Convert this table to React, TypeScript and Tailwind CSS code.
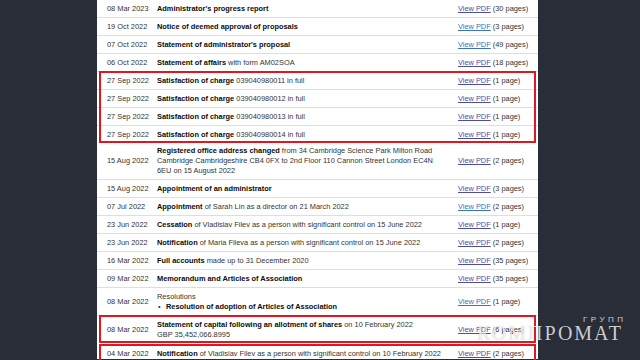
import React from "react";

const BLUE = "text-[#3b74b8]";
const PURPLE = "text-[#4f4d9e]";

function Row({
  date,
  children,
  pages,
  h = "h-[18px]",
  visited = true,
  border = true,
}: {
  date: string;
  children: React.ReactNode;
  pages: string;
  h?: string;
  visited?: boolean;
  border?: boolean;
}) {
  return (
    <div
      className={`flex items-center ${h} ${border ? "border-t border-[#dedede]" : ""} pl-[10px]`}
    >
      <div className="w-[50px] shrink-0 text-[#333]">{date}</div>
      <div className="w-[301px] shrink-0 leading-[10px] text-[#333] whitespace-nowrap">
        {children}
      </div>
      <div className="whitespace-nowrap text-[#333]">
        <span className={`underline ${visited ? PURPLE : BLUE}`}>View PDF</span> ({pages})
      </div>
    </div>
  );
}

function RedBox({ className = "" }: { className?: string }) {
  return (
    <div
      className={`pointer-events-none absolute left-[2px] right-[2px] border-2 border-[#e0171f] ${className}`}
    />
  );
}

export default function App() {
  return (
    <div
      className="relative h-[360px] w-[640px] overflow-hidden bg-[#292d37]"
      style={{ fontFamily: '"Liberation Sans", Arial, sans-serif' }}
    >
      <div className="ml-[97px] h-full w-[441px] bg-white text-[7.4px]">
        <div className="-mt-[1px]">
          <Row date="08 Mar 2023" pages="30 pages">
            <b className="text-[#0b0c0c]">Administrator's progress report</b>
          </Row>
          <Row date="19 Oct 2022" pages="3 pages" visited={false}>
            <b className="text-[#0b0c0c]">Notice of deemed approval of proposals</b>
          </Row>
          <Row date="07 Oct 2022" pages="49 pages" visited={false}>
            <b className="text-[#0b0c0c]">Statement of administrator's proposal</b>
          </Row>
          <Row date="06 Oct 2022" pages="18 pages">
            <b className="text-[#0b0c0c]">Statement of affairs</b> with form AM02SOA
          </Row>
          <div className="relative">
            <Row date="27 Sep 2022" pages="1 page">
              <b className="text-[#0b0c0c]">Satisfaction of charge</b> 039040980011 in full
            </Row>
            <Row date="27 Sep 2022" pages="1 page">
              <b className="text-[#0b0c0c]">Satisfaction of charge</b> 039040980012 in full
            </Row>
            <Row date="27 Sep 2022" pages="1 page">
              <b className="text-[#0b0c0c]">Satisfaction of charge</b> 039040980013 in full
            </Row>
            <Row date="27 Sep 2022" pages="1 page">
              <b className="text-[#0b0c0c]">Satisfaction of charge</b> 039040980014 in full
            </Row>
            <RedBox className="top-0 bottom-0" />
          </div>
          <Row date="15 Aug 2022" pages="2 pages" h="h-[36px]" border={false}>
            <b className="text-[#0b0c0c]">Registered office address changed</b> from 34 Cambridge Science Park Milton Road
            <br />
            Cambridge Cambridgeshire CB4 0FX to 2nd Floor 110 Cannon Street London EC4N
            <br />
            6EU on 15 August 2022
          </Row>
          <Row date="15 Aug 2022" pages="3 pages">
            <b className="text-[#0b0c0c]">Appointment of an administrator</b>
          </Row>
          <Row date="07 Jul 2022" pages="2 pages" visited={false}>
            <b className="text-[#0b0c0c]">Appointment</b> of Sarah Lin as a director on 21 March 2022
          </Row>
          <Row date="23 Jun 2022" pages="1 page">
            <b className="text-[#0b0c0c]">Cessation</b> of Vladislav Filev as a person with significant control on 15 June 2022
          </Row>
          <Row date="23 Jun 2022" pages="2 pages">
            <b className="text-[#0b0c0c]">Notification</b> of Maria Fileva as a person with significant control on 15 June 2022
          </Row>
          <Row date="16 Mar 2022" pages="35 pages">
            <b className="text-[#0b0c0c]">Full accounts</b> made up to 31 December 2020
          </Row>
          <Row date="09 Mar 2022" pages="35 pages">
            <b className="text-[#0b0c0c]">Memorandum and Articles of Association</b>
          </Row>
          <Row date="08 Mar 2022" pages="1 page" h="h-[28px]" visited={false}>
            <div>Resolutions</div>
            <div className="flex">
              <span className="w-[9px] pl-[1px]">•</span>
              <b className="text-[#0b0c0c]">Resolution of adoption of Articles of Association</b>
            </div>
          </Row>
          <div className="relative">
            <Row date="08 Mar 2022" pages="6 pages" h="h-[29px]">
              <b className="text-[#0b0c0c]">Statement of capital following an allotment of shares</b> on 10 February 2022
              <br />
              GBP 35,452,066.8995
            </Row>
            <RedBox className="top-0 bottom-[1px]" />
          </div>
          <div className="relative">
            <Row date="04 Mar 2022" pages="2 pages" h="h-[20px]" border={false}>
              <b className="text-[#0b0c0c]">Notification</b> of Vladislav Filev as a person with significant control on 10 February 2022
            </Row>
            <RedBox className="top-0 -bottom-[6px]" />
          </div>
        </div>
      </div>

      <div className="pointer-events-none absolute left-[583px] top-[316px] text-[8px] leading-none tracking-[3.5px] text-[rgba(255,255,255,0.78)]">
        ГРУПП
      </div>
      <div
        className="pointer-events-none absolute left-[477px] top-[323px] text-[20px] leading-none tracking-[2px] text-[rgba(255,255,255,0.78)] [text-shadow:0_0_1px_rgba(0,0,0,0.3)]"
        style={{ fontFamily: '"Liberation Serif", "Times New Roman", serif' }}
      >
        КОМПРОМАТ
      </div>
    </div>
  );
}
